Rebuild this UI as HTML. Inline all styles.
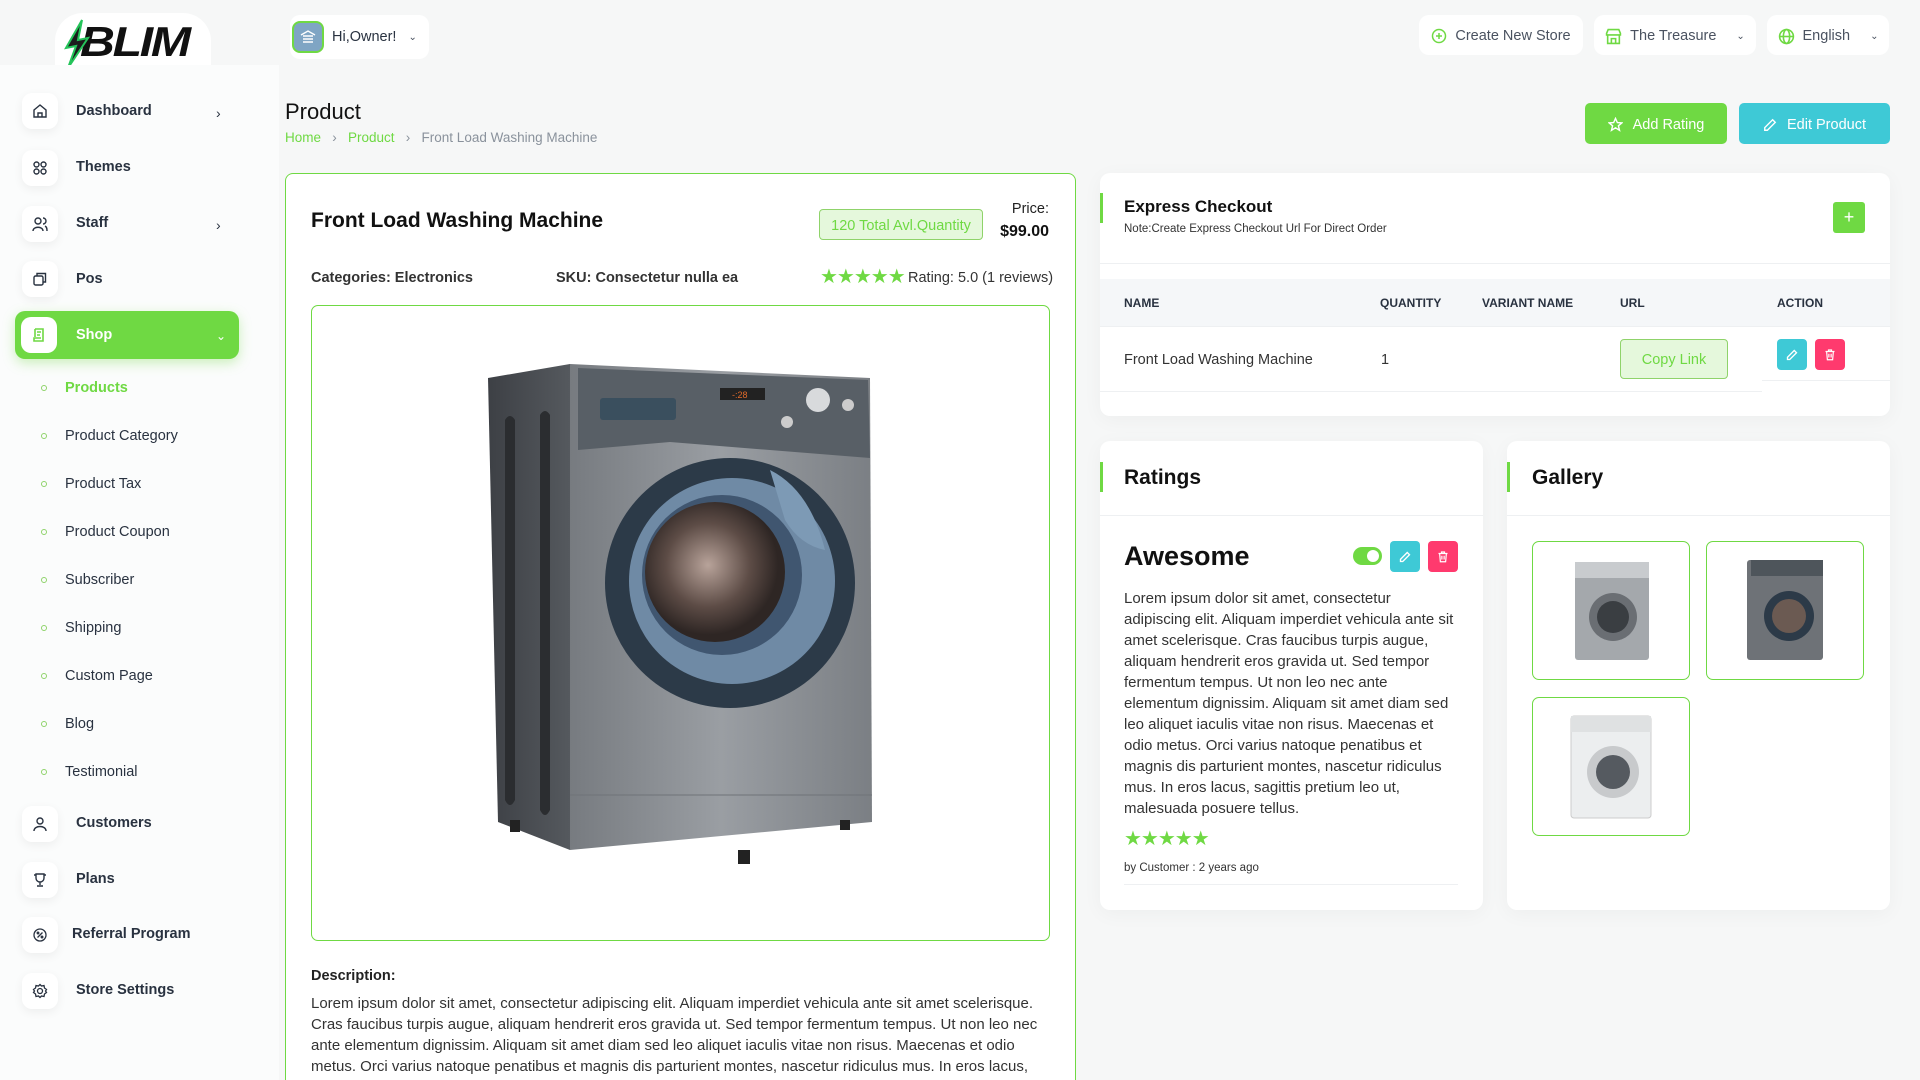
<!DOCTYPE html>
<html style="width:1920px;height:1080px;overflow:hidden"><head><meta charset="utf-8">
<style>
*{box-sizing:border-box;margin:0;padding:0}
body{width:1920px;height:1080px;overflow:hidden;background:#f6f7f7;font-family:"Liberation Sans",sans-serif;color:#293240;position:relative}
.a{position:absolute}
.side{left:0;top:65px;width:279px;height:1015px;background:#fbfcfc}
.ib{position:absolute;left:22px;width:36px;height:36px;border-radius:10px;background:#fff;box-shadow:0 3px 10px rgba(0,0,0,.06);display:flex;align-items:center;justify-content:center}
.nl{position:absolute;left:76px;font-size:14.5px;font-weight:bold;color:#293240;transform:translateY(-50%)}
.sub{position:absolute;left:65px;font-size:14.5px;color:#293240;transform:translateY(-50%)}
.dot{position:absolute;left:41px;width:6px;height:6px;border:1.5px solid #8fd36a;border-radius:50%;transform:translateY(-50%)}
.chev{position:absolute;left:216px;font-size:14px;color:#293240;transform:translateY(-50%)}
.pill{position:absolute;background:#fff;border-radius:10px;display:flex;align-items:center;font-size:14.5px;color:#4a5260}
.card{position:absolute;background:#fff;border-radius:10px;box-shadow:0 4px 20px rgba(0,0,0,.04)}
.btn{position:absolute;border-radius:5px;color:#fff;font-size:14.5px;display:flex;align-items:center;justify-content:center;gap:10px}
.star{color:#6fd943;letter-spacing:-1px}
.th{position:absolute;font-size:12px;font-weight:bold;color:#293240;transform:translateY(-50%)}
.sq{position:absolute;width:30px;height:31px;border-radius:4px;display:flex;align-items:center;justify-content:center}
.gal{position:absolute;width:158px;height:139px;border:1px solid #6fd943;border-radius:7px;background:#fff;overflow:hidden}
</style></head><body>

<!-- logo -->
<div class="a" style="left:0;top:0;width:279px;height:65px;background:#f6f7f7"></div>
<div class="a" style="left:55px;top:13px;width:156px;height:56px;background:#fff;border-radius:28px 28px 0 0"></div>
<div class="a" style="left:80px;top:18px;font-size:42px;font-weight:900;font-style:italic;color:#111;letter-spacing:-2px;transform:scaleX(1.15);transform-origin:left;font-family:'Liberation Sans',sans-serif">BLIM</div>
<svg class="a" style="left:60px;top:18px" width="32" height="52" viewBox="0 0 32 52"><path d="M22 2 L6 30 L16 28 L8 50 L28 20 L18 22 Z" fill="#1c1c1c" stroke="#25c45a" stroke-width="2"/></svg>

<!-- sidebar -->
<div class="a side"></div>
<div class="ib" style="top:93px"><svg width="16" height="16" viewBox="0 0 16 16" fill="none" stroke="#293240" stroke-width="1.4"><path d="M2 7 L8 2 L14 7 V14 H2 Z M6 14 V10 H10 V14"/></svg></div>
<div class="nl" style="top:111px">Dashboard</div><div class="chev" style="top:113px">›</div>
<div class="ib" style="top:150px"><svg width="16" height="16" viewBox="0 0 16 16" fill="none" stroke="#293240" stroke-width="1.4"><circle cx="4.5" cy="4.5" r="2.5"/><circle cx="11.5" cy="4.5" r="2.5"/><circle cx="4.5" cy="11.5" r="2.5"/><circle cx="11.5" cy="11.5" r="2.5"/></svg></div>
<div class="nl" style="top:167px">Themes</div>
<div class="ib" style="top:206px"><svg width="16" height="16" viewBox="0 0 16 16" fill="none" stroke="#293240" stroke-width="1.4"><circle cx="6" cy="5" r="3"/><path d="M1 15 C1 10 11 10 11 15 M11 2 A3 3 0 0 1 11 8 M13 10 C15 11 15 13 15 15"/></svg></div>
<div class="nl" style="top:223px">Staff</div><div class="chev" style="top:225px">›</div>
<div class="ib" style="top:261px"><svg width="16" height="16" viewBox="0 0 16 16" fill="none" stroke="#293240" stroke-width="1.4"><rect x="2" y="5" width="9" height="9" rx="1.5"/><path d="M5 5 V2.5 H13.5 V11 H11"/></svg></div>
<div class="nl" style="top:279px">Pos</div>
<div class="a" style="left:15px;top:311px;width:224px;height:48px;background:#6fd943;border-radius:10px;box-shadow:0 4px 12px rgba(111,217,67,.35)"></div>
<div class="ib" style="top:317px;left:21px;box-shadow:none"><svg width="16" height="16" viewBox="0 0 16 16" fill="none" stroke="#6fd943" stroke-width="1.6"><path d="M4 2 H12 V14 H3 V11 H10 M4 2 V10 M6 5 H10 M6 8 H9"/></svg></div>
<div class="nl" style="top:335px;color:#fff">Shop</div><div class="chev" style="top:336px;color:#fff;font-size:12px">⌄</div>
<div class="dot" style="top:388px"></div><div class="sub" style="top:388px;color:#6fd943;font-weight:bold">Products</div>
<div class="dot" style="top:436px"></div><div class="sub" style="top:436px">Product Category</div>
<div class="dot" style="top:484px"></div><div class="sub" style="top:484px">Product Tax</div>
<div class="dot" style="top:532px"></div><div class="sub" style="top:532px">Product Coupon</div>
<div class="dot" style="top:580px"></div><div class="sub" style="top:580px">Subscriber</div>
<div class="dot" style="top:628px"></div><div class="sub" style="top:628px">Shipping</div>
<div class="dot" style="top:676px"></div><div class="sub" style="top:676px">Custom Page</div>
<div class="dot" style="top:724px"></div><div class="sub" style="top:724px">Blog</div>
<div class="dot" style="top:772px"></div><div class="sub" style="top:772px">Testimonial</div>
<div class="ib" style="top:806px"><svg width="16" height="16" viewBox="0 0 16 16" fill="none" stroke="#293240" stroke-width="1.4"><circle cx="8" cy="5" r="3"/><path d="M2 15 C2 9 14 9 14 15"/></svg></div>
<div class="nl" style="top:823px">Customers</div>
<div class="ib" style="top:862px"><svg width="16" height="16" viewBox="0 0 16 16" fill="none" stroke="#293240" stroke-width="1.4"><path d="M4 2 H12 V6 A4 4 0 0 1 4 6 Z M2 3 H4 M12 3 H14 M8 10 V13 M5 14 H11"/></svg></div>
<div class="nl" style="top:879px">Plans</div>
<div class="ib" style="top:917px"><svg width="16" height="16" viewBox="0 0 16 16" fill="none" stroke="#293240" stroke-width="1.3"><circle cx="8" cy="8" r="6"/><path d="M5.5 10.5 L10.5 5.5"/><circle cx="6" cy="6" r=".8"/><circle cx="10" cy="10" r=".8"/></svg></div>
<div class="nl" style="top:934px;left:72px">Referral Program</div>
<div class="ib" style="top:973px"><svg width="16" height="16" viewBox="0 0 16 16" fill="none" stroke="#293240" stroke-width="1.3"><circle cx="8" cy="8" r="2.5"/><path d="M8 1.5 L9.5 3 L12 2.5 L12.5 5 L14.5 6.5 L13.5 8 L14.5 9.5 L12.5 11 L12 13.5 L9.5 13 L8 14.5 L6.5 13 L4 13.5 L3.5 11 L1.5 9.5 L2.5 8 L1.5 6.5 L3.5 5 L4 2.5 L6.5 3 Z"/></svg></div>
<div class="nl" style="top:990px">Store Settings</div>

<!-- top bar -->
<div class="pill" style="left:290px;top:15px;width:139px;height:44px;padding-left:0">
 <div style="margin-left:2px;width:32px;height:32px;border-radius:8px;background:#7fa5c4;border:2px solid #6fd943;display:flex;align-items:center;justify-content:center"><svg width="16" height="14" viewBox="0 0 16 14" fill="none" stroke="#fff" stroke-width="1.4"><path d="M1 5 L8 1 L15 5 M3 6 H13 M3 9 H13 M3 12 H13"/></svg></div>
 <span style="margin-left:8px;color:#293240">Hi,Owner!</span><span style="margin-left:12px;font-size:10px">⌄</span></div>
<div class="pill" style="left:1419px;top:15px;width:164px;height:40px;justify-content:center;gap:8px;padding-top:2px"><svg width="16" height="16" viewBox="0 0 16 16" fill="none" stroke="#6fd943" stroke-width="1.5"><circle cx="8" cy="8" r="6.5"/><path d="M8 5 V11 M5 8 H11"/></svg>Create New Store</div>
<div class="pill" style="left:1594px;top:15px;width:162px;height:40px;justify-content:center;gap:8px;padding-top:2px"><svg width="17" height="17" viewBox="0 0 16 16" fill="none" stroke="#6fd943" stroke-width="1.5"><path d="M1.5 5 L3 1.5 H13 L14.5 5 V6.5 H1.5 Z M2.5 6.5 V14.5 H13.5 V6.5 M6 14.5 V10 H10 V14.5"/></svg>The Treasure<span style="margin-left:12px;font-size:10px">⌄</span></div>
<div class="pill" style="left:1767px;top:15px;width:122px;height:40px;justify-content:center;gap:8px;padding-top:2px"><svg width="17" height="17" viewBox="0 0 16 16" fill="none" stroke="#6fd943" stroke-width="1.5"><circle cx="8" cy="8" r="6.5"/><ellipse cx="8" cy="8" rx="3" ry="6.5"/><path d="M1.5 8 H14.5"/></svg>English<span style="margin-left:12px;font-size:10px">⌄</span></div>

<!-- heading -->
<div class="a" style="left:285px;top:99px;font-size:22px;color:#111">Product</div>
<div class="a" style="left:285px;top:130px;font-size:13.5px;color:#8a929c"><span style="color:#6fd943">Home</span>&nbsp;&nbsp;&nbsp;›&nbsp;&nbsp;&nbsp;<span style="color:#6fd943">Product</span>&nbsp;&nbsp;&nbsp;›&nbsp;&nbsp;&nbsp;Front Load Washing Machine</div>
<div class="btn" style="left:1585px;top:103px;width:142px;height:41px;background:#6fd943;padding-top:2px"><svg width="15" height="15" viewBox="0 0 16 16" fill="none" stroke="#fff" stroke-width="1.5"><path d="M8 1.5 L10 6 L14.8 6.3 L11.1 9.4 L12.3 14.2 L8 11.5 L3.7 14.2 L4.9 9.4 L1.2 6.3 L6 6 Z"/></svg>Add Rating</div>
<div class="btn" style="left:1739px;top:103px;width:151px;height:41px;background:#3ec9d6;padding-top:2px"><svg width="14" height="14" viewBox="0 0 16 16" fill="none" stroke="#fff" stroke-width="1.6"><path d="M11 2 L14 5 L5 14 H2 V11 Z"/></svg>Edit Product</div>

<!-- product card -->
<div class="a" style="left:285px;top:173px;width:791px;height:907px;background:#fff;border:1px solid #6fd943;border-bottom:none;border-radius:8px 8px 0 0"></div>
<div class="a" style="left:311px;top:209px;font-size:21px;font-weight:bold;color:#111">Front Load Washing Machine</div>
<div class="a" style="left:819px;top:209px;width:164px;height:31px;background:#e5f8dc;border:1px solid #8fd36a;border-radius:4px;color:#6fd943;font-size:14.5px;display:flex;align-items:center;justify-content:center;padding-top:2px">120 Total Avl.Quantity</div>
<div class="a" style="left:980px;top:201px;width:69px;text-align:right;font-size:14.5px;color:#222">Price:</div>
<div class="a" style="left:970px;top:223px;width:79px;text-align:right;font-size:16px;font-weight:bold;color:#111">$99.00</div>
<div class="a" style="left:311px;top:270px;font-size:14.5px;font-weight:bold;color:#333">Categories: Electronics</div>
<div class="a" style="left:556px;top:270px;font-size:14.5px;font-weight:bold;color:#333">SKU: Consectetur nulla ea</div>
<div class="a" style="left:820px;top:264px;font-size:20px"><span class="star">★★★★★</span></div>
<div class="a" style="left:908px;top:270px;font-size:14.5px;color:#333">Rating: 5.0 (1 reviews)</div>
<div class="a" style="left:311px;top:305px;width:739px;height:636px;border:1px solid #6fd943;border-radius:7px"></div>
<svg class="a" style="left:470px;top:350px" width="420" height="540" viewBox="0 0 420 540">
 <defs>
  <linearGradient id="f" x1="0" x2="1"><stop offset="0" stop-color="#777b80"/><stop offset=".5" stop-color="#9a9ea3"/><stop offset="1" stop-color="#7b7f84"/></linearGradient>
  <linearGradient id="s" x1="0" x2="1"><stop offset="0" stop-color="#3d4045"/><stop offset="1" stop-color="#55595e"/></linearGradient>
  <radialGradient id="d" cx=".45" cy=".45"><stop offset="0" stop-color="#b8a39a"/><stop offset=".6" stop-color="#5d4c46"/><stop offset="1" stop-color="#2e2624"/></radialGradient>
 </defs>
 <path d="M18 28 L100 14 L100 500 L28 472 Z" fill="url(#s)"/>
 <path d="M100 14 L400 28 L402 472 L100 500 Z" fill="url(#f)"/>
 <path d="M108 18 L398 30 L400 108 L200 92 L108 100 Z" fill="#585f66"/>
 <rect x="130" y="48" width="76" height="22" rx="3" fill="#3a4f5e"/>
 <rect x="250" y="38" width="45" height="12" fill="#222"/><text x="262" y="48" font-size="9" fill="#e06a2a" font-family="Liberation Sans">-:28</text>
 <circle cx="348" cy="50" r="12" fill="#d8dadc"/><circle cx="378" cy="55" r="6" fill="#ccc"/><circle cx="317" cy="72" r="6" fill="#ccc"/>
 <path d="M35 70 Q40 62 45 70 L45 450 Q40 460 35 450 Z M70 65 Q75 57 80 65 L80 460 Q75 470 70 460 Z" fill="#2b2d30"/>
 <circle cx="260" cy="233" r="125" fill="#2c3a48"/>
 <circle cx="262" cy="231" r="103" fill="#6f8aa5"/>
 <circle cx="252" cy="225" r="80" fill="#405670"/>
 <circle cx="245" cy="222" r="70" fill="url(#d)"/>
 <path d="M300 120 Q340 140 355 200 Q330 195 315 170 Z" fill="#7d9ab5"/>
 <path d="M100 445 L402 445" stroke="#6f7378"/>
 <rect x="40" y="470" width="10" height="12" fill="#222"/><rect x="268" y="500" width="12" height="14" fill="#222"/><rect x="370" y="470" width="10" height="10" fill="#222"/>
</svg>
<div class="a" style="left:311px;top:968px;font-size:14.5px;font-weight:bold;color:#222">Description:</div>
<div class="a" style="left:311px;top:993px;width:740px;font-size:15px;line-height:21px;color:#333">Lorem ipsum dolor sit amet, consectetur adipiscing elit. Aliquam imperdiet vehicula ante sit amet scelerisque. Cras faucibus turpis augue, aliquam hendrerit eros gravida ut. Sed tempor fermentum tempus. Ut non leo nec ante elementum dignissim. Aliquam sit amet diam sed leo aliquet iaculis vitae non risus. Maecenas et odio metus. Orci varius natoque penatibus et magnis dis parturient montes, nascetur ridiculus mus. In eros lacus,</div>

<!-- express checkout -->
<div class="card" style="left:1100px;top:173px;width:790px;height:243px"></div>
<div class="a" style="left:1100px;top:193px;width:3px;height:30px;background:#6fd943"></div>
<div class="a" style="left:1124px;top:197px;font-size:17px;font-weight:bold;color:#111">Express Checkout</div>
<div class="a" style="left:1124px;top:223px;font-size:11.5px;color:#333">Note:Create Express Checkout Url For Direct Order</div>
<div class="a" style="left:1833px;top:202px;width:32px;height:31px;background:#6fd943;border-radius:3px;color:#fff;font-size:18px;text-align:center;line-height:30px">+</div>
<div class="a" style="left:1100px;top:263px;width:790px;height:1px;background:#eef0f2"></div>
<div class="a" style="left:1100px;top:279px;width:790px;height:47px;background:#f5f7f9"></div>
<div class="th" style="left:1124px;top:303px">NAME</div>
<div class="th" style="left:1380px;top:303px">QUANTITY</div>
<div class="th" style="left:1482px;top:303px">VARIANT NAME</div>
<div class="th" style="left:1620px;top:303px">URL</div>
<div class="th" style="left:1777px;top:303px">ACTION</div>
<div class="a" style="left:1100px;top:326px;width:790px;height:1px;background:#eef0f2"></div>
<div class="a" style="left:1124px;top:352px;font-size:14.5px;color:#333">Front Load Washing Machine</div>
<div class="a" style="left:1381px;top:352px;font-size:14.5px;color:#333">1</div>
<div class="a" style="left:1620px;top:339px;width:108px;height:40px;background:#e5f8dc;border:1px solid #8fd36a;border-radius:4px;color:#6fd943;font-size:14.5px;display:flex;align-items:center;justify-content:center;padding-top:2px">Copy Link</div>
<div class="sq" style="left:1777px;top:339px;background:#3ec9d6"><svg width="12" height="12" viewBox="0 0 16 16" fill="none" stroke="#fff" stroke-width="1.8"><path d="M11 2 L14 5 L5 14 H2 V11 Z"/></svg></div>
<div class="sq" style="left:1815px;top:339px;background:#ff3a6e"><svg width="12" height="13" viewBox="0 0 16 16" fill="none" stroke="#fff" stroke-width="1.6"><path d="M2 4 H14 M6 4 V2 H10 V4 M3.5 4 L4.5 15 H11.5 L12.5 4 M6.5 7 V12 M9.5 7 V12"/></svg></div>
<div class="a" style="left:1100px;top:391px;width:662px;height:1px;background:#eef0f2"></div>
<div class="a" style="left:1762px;top:380px;width:128px;height:1px;background:#eef0f2"></div>

<!-- ratings -->
<div class="card" style="left:1100px;top:441px;width:383px;height:469px"></div>
<div class="a" style="left:1100px;top:462px;width:3px;height:30px;background:#6fd943"></div>
<div class="a" style="left:1124px;top:466px;font-size:21px;font-weight:bold;color:#111">Ratings</div>
<div class="a" style="left:1100px;top:515px;width:383px;height:1px;background:#eef0f2"></div>
<div class="a" style="left:1124px;top:541px;font-size:27px;font-weight:bold;color:#111">Awesome</div>
<div class="a" style="left:1353px;top:547px;width:29px;height:18px;border-radius:9px;background:#6fd943"><div style="position:absolute;right:3px;top:3px;width:12px;height:12px;border-radius:50%;background:#fff"></div></div>
<div class="sq" style="left:1390px;top:541px;background:#3ec9d6"><svg width="12" height="12" viewBox="0 0 16 16" fill="none" stroke="#fff" stroke-width="1.8"><path d="M11 2 L14 5 L5 14 H2 V11 Z"/></svg></div>
<div class="sq" style="left:1428px;top:541px;background:#ff3a6e"><svg width="12" height="13" viewBox="0 0 16 16" fill="none" stroke="#fff" stroke-width="1.6"><path d="M2 4 H14 M6 4 V2 H10 V4 M3.5 4 L4.5 15 H11.5 L12.5 4 M6.5 7 V12 M9.5 7 V12"/></svg></div>
<div class="a" style="left:1124px;top:588px;width:332px;font-size:15px;line-height:21px;color:#333">Lorem ipsum dolor sit amet, consectetur adipiscing elit. Aliquam imperdiet vehicula ante sit amet scelerisque. Cras faucibus turpis augue, aliquam hendrerit eros gravida ut. Sed tempor fermentum tempus. Ut non leo nec ante elementum dignissim. Aliquam sit amet diam sed leo aliquet iaculis vitae non risus. Maecenas et odio metus. Orci varius natoque penatibus et magnis dis parturient montes, nascetur ridiculus mus. In eros lacus, sagittis pretium leo ut, malesuada posuere tellus.</div>
<div class="a star" style="left:1124px;top:826px;font-size:20px">★★★★★</div>
<div class="a" style="left:1124px;top:862px;font-size:11.5px;color:#333">by Customer : 2 years ago</div>
<div class="a" style="left:1124px;top:884px;width:334px;height:1px;background:#eef0f2"></div>

<!-- gallery -->
<div class="card" style="left:1507px;top:441px;width:383px;height:469px"></div>
<div class="a" style="left:1507px;top:462px;width:3px;height:30px;background:#6fd943"></div>
<div class="a" style="left:1532px;top:466px;font-size:21px;font-weight:bold;color:#111">Gallery</div>
<div class="a" style="left:1507px;top:515px;width:383px;height:1px;background:#eef0f2"></div>
<div class="gal" style="left:1532px;top:541px"><svg width="158" height="139"><rect x="42" y="20" width="74" height="98" rx="3" fill="#a4a8ac"/><rect x="42" y="20" width="74" height="16" fill="#c8cbce"/><circle cx="80" cy="75" r="24" fill="#6a6e73"/><circle cx="80" cy="75" r="16" fill="#3a3e42"/></svg></div>
<div class="gal" style="left:1706px;top:541px"><svg width="158" height="139"><rect x="40" y="18" width="76" height="100" rx="3" fill="#6e7277"/><rect x="44" y="18" width="72" height="16" fill="#4e555b"/><circle cx="82" cy="74" r="25" fill="#2c3a48"/><circle cx="82" cy="74" r="17" fill="#6b5a52"/></svg></div>
<div class="gal" style="left:1532px;top:697px"><svg width="158" height="139"><rect x="38" y="18" width="80" height="102" rx="3" fill="#eceeef" stroke="#ccc"/><rect x="38" y="18" width="80" height="16" fill="#dfe1e2"/><circle cx="80" cy="74" r="26" fill="#c8cacc"/><circle cx="80" cy="74" r="17" fill="#555a60"/></svg></div>

</body></html>
